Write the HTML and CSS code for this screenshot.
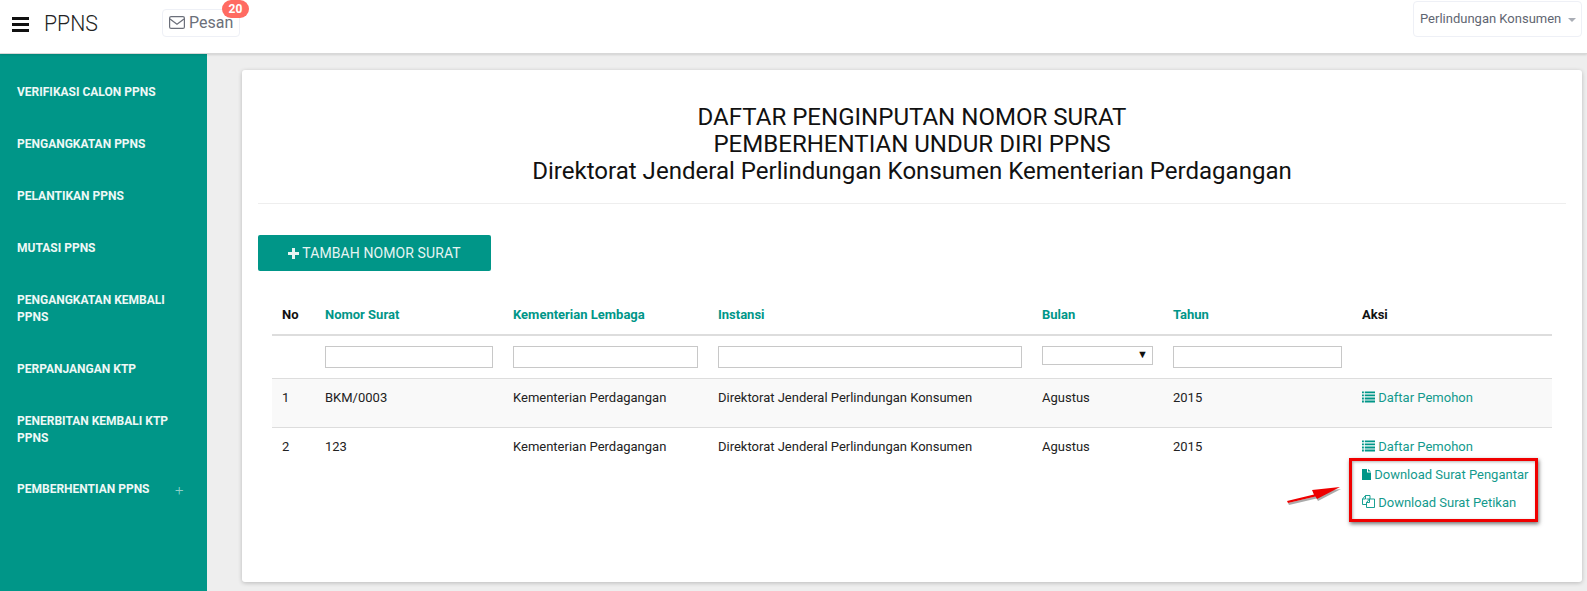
FILE: index.html
```html
<!DOCTYPE html>
<html lang="en">
<head>
  <meta charset="UTF-8" />
  <title>PPNS</title>
  <link rel="stylesheet" href="styles.css">
</head>
<body>
  <!-- Top bar -->
  <header class="topbar">
    <div class="burger"><span></span><span></span><span></span></div>
    <div class="brand">PPNS</div>
    <div class="msg-btn">
      <svg class="msg-icon" width="16" height="13" viewBox="0 0 16 13"><rect x="0.6" y="0.6" width="14.8" height="11.8" rx="1.5" fill="none" stroke="#6b6f7a" stroke-width="1.2"/><path d="M1 3l7 5.2L15 3" fill="none" stroke="#6b6f7a" stroke-width="1.2"/></svg>
      Pesan
      <span class="badge">20</span>
    </div>
    <div class="user-btn">Perlindungan Konsumen <span class="caret"></span></div>
  </header>

  <div class="layout">
    <!-- Sidebar -->
    <nav class="sidebar">
      <a class="nav-item">VERIFIKASI CALON PPNS</a>
      <a class="nav-item">PENGANGKATAN PPNS</a>
      <a class="nav-item">PELANTIKAN PPNS</a>
      <a class="nav-item">MUTASI PPNS</a>
      <a class="nav-item">PENGANGKATAN KEMBALI PPNS</a>
      <a class="nav-item">PERPANJANGAN KTP</a>
      <a class="nav-item">PENERBITAN KEMBALI KTP PPNS</a>
      <a class="nav-item nav-more">PEMBERHENTIAN PPNS <span class="plus">+</span></a>
    </nav>

    <main class="content">
      <section class="card">
        <div class="title">
          DAFTAR PENGINPUTAN NOMOR SURAT<br>
          PEMBERHENTIAN UNDUR DIRI PPNS<br>
          Direktorat Jenderal Perlindungan Konsumen Kementerian Perdagangan
        </div>

        <a class="add-btn">
          <svg width="11" height="11" viewBox="0 0 11 11"><path d="M4 0h3v4h4v3H7v4H4V7H0V4h4z" fill="#e6f4f2"/></svg>
          TAMBAH NOMOR SURAT
        </a>

        <table class="data-table">
          <colgroup>
            <col class="col-no"><col class="col-nomor"><col class="col-kl"><col class="col-inst"><col class="col-bulan"><col class="col-tahun"><col class="col-aksi">
          </colgroup>
          <thead>
            <tr class="head-row">
              <th>No</th>
              <th class="sortable">Nomor Surat</th>
              <th class="sortable">Kementerian Lembaga</th>
              <th class="sortable">Instansi</th>
              <th class="sortable">Bulan</th>
              <th class="sortable">Tahun</th>
              <th>Aksi</th>
            </tr>
            <tr class="filter-row">
              <th></th>
              <th><input type="text"></th>
              <th><input type="text"></th>
              <th><input type="text"></th>
              <th><div class="fake-select"><span class="select-arrow">▼</span></div></th>
              <th><input type="text"></th>
              <th></th>
            </tr>
          </thead>
          <tbody>
            <tr class="row-odd">
              <td>1</td>
              <td>BKM/0003</td>
              <td>Kementerian Perdagangan</td>
              <td>Direktorat Jenderal Perlindungan Konsumen</td>
              <td>Agustus</td>
              <td>2015</td>
              <td>
                <a class="act">
                  <svg class="act-icon" width="13" height="12" viewBox="0 0 14 12"><path d="M0 0h2v2H0zM3 0h11v2H3zM0 3.3h2v2H0zM3 3.3h11v2H3zM0 6.6h2v2H0zM3 6.6h11v2H3zM0 9.9h2v2H0zM3 9.9h11v2H3z" fill="#009688"/></svg>
                  Daftar Pemohon
                </a>
              </td>
            </tr>
            <tr>
              <td>2</td>
              <td>123</td>
              <td>Kementerian Perdagangan</td>
              <td>Direktorat Jenderal Perlindungan Konsumen</td>
              <td>Agustus</td>
              <td>2015</td>
              <td>
                <a class="act">
                  <svg class="act-icon" width="13" height="12" viewBox="0 0 14 12"><path d="M0 0h2v2H0zM3 0h11v2H3zM0 3.3h2v2H0zM3 3.3h11v2H3zM0 6.6h2v2H0zM3 6.6h11v2H3zM0 9.9h2v2H0zM3 9.9h11v2H3z" fill="#009688"/></svg>
                  Daftar Pemohon
                </a>
                <a class="act">
                  <svg class="act-icon" width="9" height="11" viewBox="0 0 9 11"><path d="M0 0h5v3.5h4V11H0zM6 0l3 2.6H6z" fill="#009688"/></svg>
                  Download Surat Pengantar
                </a>
                <a class="act">
                  <svg class="act-icon" width="13" height="13" viewBox="0 0 13 13"><path d="M4.500 9.500H.5V4L3.500.5H8v3.500M3.500.5V4H.5" fill="none" stroke="#009688" stroke-width="0.9"/><path d="M4.500 4h8v8.500h-8V7.500L7.500 4M7.500 4v3.500h-3" fill="none" stroke="#009688" stroke-width="0.9"/></svg>
                  Download Surat Petikan
                </a>
              </td>
            </tr>
          </tbody>
        </table>
      </section>
    </main>
  </div>

  <!-- Annotation drawn over the screenshot -->
  <div class="mark-box"></div>
  <svg class="mark-arrow" width="56" height="24" viewBox="0 0 56 24">
    <path d="M1 20L28 13.500L26 9L54 6L31 18L29.500 15.500L2 22z" fill="#555" opacity="0.5" transform="translate(1 2)"/>
    <path d="M1 20L28 13.500L26 9L54 6L31 18L29.500 15.500L2 22z" fill="#ee0000"/>
  </svg>
</body>
</html>
```

FILE: styles.css
```css
* {
  box-sizing: border-box;
}

html, body {
  height: 591px;
  overflow: hidden;
}

body {
  margin: 0;
  font-family: Roboto, "Liberation Sans", sans-serif;
  font-size: 13px;
  color: #1a1a1a;
  background: #eeeeee;
  position: relative;
}

/* top bar */
.topbar {
  height: 54px;
  background: #fff;
  border-bottom: 1px solid #d8d8d8;
  box-shadow: 0 1px 2px rgba(0, 0, 0, 0.12);
  display: flex;
  align-items: flex-start;
  padding-left: 12px;
  position: relative;
  z-index: 2;
}

.burger {
  width: 17px;
  margin-top: 17px;
  display: flex;
  flex-direction: column;
  gap: 3px;
}

.burger span {
  display: block;
  height: 3px;
  background: #111;
}

.brand {
  margin-left: 15px;
  margin-top: 11px;
  font-size: 21.3px;
  font-weight: 300;
  line-height: 26px;
  color: #222;
}

.msg-btn {
  margin-left: 64px;
  margin-top: 9px;
  width: 78px;
  height: 28px;
  border: 1px solid #eef0f6;
  border-radius: 4px;
  font-size: 16px;
  line-height: 26px;
  color: #6b6f7a;
  padding-left: 6px;
  position: relative;
  white-space: nowrap;
}

.msg-icon {
  vertical-align: -1px;
}

.badge {
  position: absolute;
  top: -10px;
  left: 59px;
  width: 27px;
  height: 18px;
  border-radius: 9px;
  background: #ff6b62;
  color: #fff;
  font-size: 12px;
  font-weight: 700;
  line-height: 18px;
  text-align: center;
}

.user-btn {
  margin-left: auto;
  margin-right: 5px;
  margin-top: 1px;
  width: 169px;
  height: 36px;
  border: 1px solid #eef0f6;
  border-radius: 4px;
  color: #5f6672;
  font-size: 13px;
  line-height: 34px;
  padding-left: 6px;
  white-space: nowrap;
}

.caret {
  display: inline-block;
  margin-left: 3px;
  vertical-align: 1px;
  border-left: 4px solid transparent;
  border-right: 4px solid transparent;
  border-top: 4px solid #a9adb5;
}

.layout {
  display: flex;
  height: 537px;
}

/* sidebar */
.sidebar {
  width: 207px;
  flex-shrink: 0;
  background: #009688;
  padding: 21px 17px 0;
  display: flex;
  flex-direction: column;
}

.nav-item {
  display: block;
  color: #eef8f6;
  font-size: 12px;
  font-weight: 700;
  line-height: 17px;
  padding: 9px 0 26px;
  width: 160px;
}

.nav-more {
  width: 173px;
  margin-top: -1px;
  position: relative;
  white-space: nowrap;
}

.plus {
  position: absolute;
  left: 158px;
  top: 10px;
  font-weight: 300;
  font-size: 15px;
  color: #8fd0c8;
}

/* main card */
.content {
  flex: 1;
  padding: 16px 5px 9px 35px;
}

.card {
  height: 100%;
  background: #fff;
  border-radius: 3px;
  box-shadow: 0 1px 4px rgba(0, 0, 0, 0.22);
  padding: 34px 16px 0 16px;
}

.title {
  text-align: center;
  font-size: 24.05px;
  line-height: 27px;
  color: #111;
  padding-bottom: 18px;
  border-bottom: 1px solid #eeeeee;
  margin-bottom: 31px;
}

.add-btn {
  display: flex;
  align-items: center;
  justify-content: center;
  gap: 3px;
  width: 233px;
  height: 36px;
  background: #009688;
  border-radius: 2px;
  color: #e6f4f2;
  font-size: 14px;
  letter-spacing: 0.1px;
}

.data-table {
  width: 1280px;
  margin: 25px 0 0 14px;
  border-collapse: collapse;
  table-layout: fixed;
}

.col-no { width: 43px; }
.col-nomor { width: 188px; }
.col-kl { width: 205px; }
.col-inst { width: 324px; }
.col-bulan { width: 131px; }
.col-tahun { width: 189px; }
.col-aksi { width: 200px; }

.data-table th {
  text-align: left;
  font-weight: 700;
  padding: 0 10px;
}

.data-table .head-row th {
  height: 39px;
  padding-bottom: 2px;
  color: #111;
  border-bottom: 2px solid #dddddd;
}

.data-table .head-row .sortable {
  color: #009688;
}

.filter-row th {
  height: 43px;
  padding: 0 10px;
  border-bottom: 1px solid #dddddd;
}

.filter-row input {
  display: block;
  width: 100%;
  height: 22px;
  border: 1px solid #c8c8c8;
  background: #fff;
  padding: 0;
}

.fake-select {
  width: 111px;
  height: 19px;
  border: 1px solid #c8c8c8;
  position: relative;
  top: -1px;
}

.select-arrow {
  position: absolute;
  right: 4px;
  top: 0;
  font-size: 11px;
  line-height: 15px;
  color: #111;
}

.data-table td {
  vertical-align: top;
  padding: 10px 10px 11px;
  line-height: 17px;
  color: #222;
  border-bottom: 1px solid #dddddd;
}

.data-table tbody tr:last-child td {
  border-bottom: none;
}

.row-odd td {
  background: #f9f9f9;
  height: 49px;
}

.row-odd .act {
  margin-bottom: 0;
}

.act {
  display: block;
  color: #139a8d;
  white-space: nowrap;
  margin-bottom: 11px;
}

.act-icon {
  vertical-align: -1px;
}

/* red annotation */
.mark-box {
  position: absolute;
  left: 1349px;
  top: 458px;
  width: 189px;
  height: 64px;
  border: 3px solid #f00000;
  box-shadow: 1px 2px 4px rgba(0, 0, 0, 0.55), inset 1px 1px 3px rgba(0, 0, 0, 0.3);
}

.mark-arrow {
  position: absolute;
  left: 1286px;
  top: 481px;
}
```
